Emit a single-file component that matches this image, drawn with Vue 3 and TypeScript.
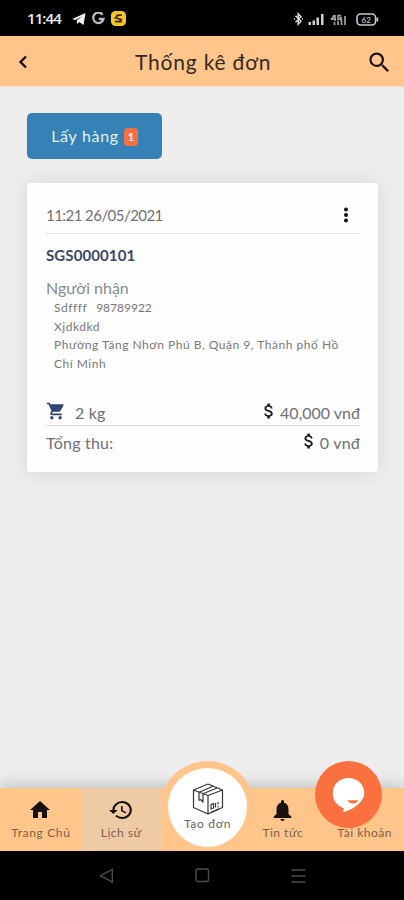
<script setup lang="ts">
interface Order {
  time: string
  code: string
  name: string
  phone: string
  note: string
  address: string
  weight: string
  fee: string
  total: string
}

const order: Order = {
  time: '11:21 26/05/2021',
  code: 'SGS0000101',
  name: 'Sdffff',
  phone: '98789922',
  note: 'Xjdkdkd',
  address: 'Phường Tăng Nhơn Phú B, Quận 9, Thành phố Hồ Chí Minh',
  weight: '2 kg',
  fee: '40,000 vnđ',
  total: '0 vnđ',
}
const pending = 1
const dollar =
  'M11.8 10.9c-2.27-.59-3-1.2-3-2.15 0-1.09 1.01-1.85 2.7-1.85 1.78 0 2.44.85 2.5 2.1h2.21c-.07-1.72-1.12-3.3-3.21-3.81V3h-3v2.16c-1.94.42-3.5 1.68-3.5 3.61 0 2.31 1.91 3.46 4.7 4.13 2.5.6 3 1.48 3 2.41 0 .69-.49 1.79-2.7 1.79-2.06 0-2.87-.92-2.98-2.1h-2.2c.12 2.19 1.76 3.42 3.68 3.83V21h3v-2.15c1.95-.37 3.5-1.5 3.5-3.55 0-2.84-2.43-3.81-4.7-4.4z'
</script>

<template>
  <div class="screen">
    <div class="status">
      <span class="clock">11:44</span>
      <svg class="plane" width="14" height="12" viewBox="0 0 14 12"><path d="M0 6 13.5 0 11.5 12 7.2 9 5.2 11 4.8 7.4 10 3.2 3.6 7z" fill="#f2f2f2" /></svg>
      <svg class="goog" width="13" height="13" viewBox="0 0 13 13"><path d="M10.6 2.7A5.2 5.2 0 1 0 11.5 7H6.8" fill="none" stroke="#bdbdbd" stroke-width="2.3" /></svg>
      <svg class="app" width="15" height="15" viewBox="0 0 15 15"><rect width="15" height="15" rx="4.5" fill="#f5c52c" /><path d="M10.8 4.2H7.2L4.5 6.8l5.700 1.600-2.200 2.300H4M5 4.500h2M8 10.700h3" fill="none" stroke="#3c3212" stroke-width="1.700" /></svg>
      <span class="grow"></span>
      <svg class="right-icons" width="87" height="14" viewBox="0 0 87 14">
        <path d="M2.500 3.800 8 9.300 5.200 12.200V1.800L8 4.700 2.500 10.200" fill="none" stroke="#d8d8d8" stroke-width="1.500" />
        <path d="M1.500 6v2M9.500 6v2" stroke="#aaa" />
        <path d="M15.500 10H18v3h-2.500zM19.500 8.500H22V13h-2.500zM23.500 5.500H26V13h-2.500zM28 2h2.500v11H28z" fill="#d0d0d0" />
        <path d="M38.500 6v2M41 3l-2 4h4M42 3v6M48 3.500h-3v4h3V5.500h-1.500M41.500 10v3M45 9v4M48.500 7.500V13M52 4v9" fill="none" stroke="#aaa" stroke-width="1.600" />
        <rect x="64" y="2" width="18.500" height="11" rx="3.500" fill="none" stroke="#c8c8c8" stroke-width="1.600" />
        <path d="M84.300 5.500v4" stroke="#c8c8c8" stroke-width="1.800" />
        <text x="73.200" y="10.500" text-anchor="middle" font-size="8" font-weight="700" fill="#b5b5b5">62</text>
      </svg>
    </div>

    <header class="header">
      <svg class="back" width="10" height="14" viewBox="0 0 10 14"><path d="M8 1.500 2.500 7 8 12.500" fill="none" stroke="#1b130c" stroke-width="2.400" /></svg>
      <h1 class="title">Thống kê đơn</h1>
      <svg class="search" width="27" height="27" viewBox="0 0 24 24"><path fill="#1b130c" d="M15.500 14h-.79l-.28-.27A6.471 6.471 0 0 0 16 9.500 6.500 6.500 0 1 0 9.500 16c1.610 0 3.090-.59 4.230-1.570l.27.28v.79l5 4.990L20.490 19l-4.990-5zm-6 0C7.010 14 5 11.990 5 9.500S7.010 5 9.500 5 14 7.010 14 9.500 11.990 14 9.500 14z" /></svg>
    </header>

    <main class="content">
      <button class="pickup" type="button">
        <span>Lấy hàng</span><span class="badge">{{ pending }}</span>
      </button>

      <section class="card">
        <div class="card-head">
          <span class="time">{{ order.time }}</span>
          <svg width="6" height="16" viewBox="0 0 6 16" class="dots"><circle cx="3" cy="2.400" r="2" /><circle cx="3" cy="8" r="2" /><circle cx="3" cy="13.600" r="2" /></svg>
        </div>
        <div class="code">{{ order.code }}</div>
        <div class="receiver">Người nhận</div>
        <div class="details">
          <div><span>{{ order.name }}</span><span class="phone">{{ order.phone }}</span></div>
          <div>{{ order.note }}</div>
          <div class="address">{{ order.address }}</div>
        </div>
        <div class="row fee">
          <svg class="cart" width="20" height="20" viewBox="0 0 24 24"><path fill="#2f4474" d="M7 18c-1.100 0-1.990.9-1.990 2S5.900 22 7 22s2-.9 2-2-.9-2-2-2zM1 2v2h2l3.600 7.590-1.350 2.450c-.16.28-.25.61-.25.96 0 1.100.9 2 2 2h12v-2H7.420c-.14 0-.25-.11-.25-.25l.03-.12.9-1.630h7.450c.75 0 1.410-.41 1.750-1.030l3.580-6.490A1 1 0 0 0 20 4H5.210l-.94-2H1zm16 16c-1.100 0-1.990.9-1.990 2s.89 2 1.990 2 2-.9 2-2-.9-2-2-2z" /></svg>
          <span class="weight">{{ order.weight }}</span>
          <span class="grow"></span>
          <svg class="dollar" width="20" height="20" viewBox="0 0 24 24"><path :d="dollar" /></svg>
          <span>{{ order.fee }}</span>
        </div>
        <div class="row total">
          <span class="total-label">Tổng thu:</span>
          <span class="grow"></span>
          <svg class="dollar" width="20" height="20" viewBox="0 0 24 24"><path :d="dollar" /></svg>
          <span class="total-text">{{ order.total }}</span>
        </div>
      </section>
    </main>

    <nav class="nav">
      <div class="tab">
        <svg width="24" height="24" viewBox="0 0 24 24"><path d="M10 20v-6h4v6h5v-8h3L12 3 2 12h3v8z" /></svg>
        <span class="t-home">Trang Chủ</span>
      </div>
      <div class="tab active">
        <svg width="26" height="24" viewBox="0 0 24 24" preserveAspectRatio="none"><path d="M13 3a9 9 0 0 0-9 9H1l3.890 3.890.07.14L9 12H6a7 7 0 1 1 2.060 4.940l-1.420 1.420A9 9 0 1 0 13 3zm-1 5v5l4.280 2.540.72-1.210-3.500-2.080V8z" /></svg>
        <span>Lịch sử</span>
      </div>
      <div class="tab"></div>
      <div class="tab">
        <svg width="25" height="24" viewBox="0 0 24 24"><path d="M12 23c1.100 0 2-.9 2-2h-4a2 2 0 0 0 2 2zm6-7v-5c0-3.070-1.640-5.640-4.500-6.320V3.500a1.500 1.500 0 0 0-3 0v1.180C7.630 5.360 6 7.920 6 11v5l-2.800 2.500V20h17.600v-1.500z" /></svg>
        <span>Tin tức</span>
      </div>
      <div class="tab account">
        <svg width="24" height="24" viewBox="0 0 24 24"><circle cx="12" cy="8" r="4" /></svg>
        <span>Tài khoản</span>
      </div>
      <div class="create">
        <svg width="32" height="32" viewBox="0 0 32 32" fill="none" stroke="#353535" stroke-width="1.200" stroke-linejoin="round">
          <path d="M16 1 30.500 7v17.500L16 31 1.500 24.500V7zM1.500 7 16 12.500 30.500 7M16 12.500V31" />
          <path d="M7 9.200 21 3.200M11 10.700 25 5M7 9.200v8l1.800-.6 2.200 2.400v-8.300" />
          <path d="m19 21.500 2.500-1v4.500L19 26zm4.500-1.500v4.500m2.500-5.500v2.500m0 1.500v1.500m-7 4.700 8-3.300" />
        </svg>
        <span>Tạo đơn</span>
      </div>
      <div class="chat">
        <svg width="34" height="36" viewBox="0 0 34 36"><path fill="#fff" d="M16.500 1C7.500 1 .8 7.500.8 16.200c0 7.600 4.500 13 11 14.800L11 35.300c6-1.600 12.500-5 16.500-9.300 3-3.200 4.800-6.200 4.800-10C32.300 7.500 25.500 1 16.500 1z" /><path d="M15.500 23.200h10.800c-2.300 4.300-8.500 4.300-10.800 0z" fill="#fa703f" /></svg>
      </div>
    </nav>

    <div class="system">
      <svg width="15" height="16" viewBox="0 0 15 16"><path d="M13.300 1.500v12.500L1.500 7.700z" /></svg>
      <svg width="15" height="15" viewBox="0 0 15 15"><rect x="1" y="1" width="12.500" height="12.500" rx="2" /></svg>
      <svg width="15" height="16" viewBox="0 0 15 16"><path d="M.5 2h14M.5 8h14M.5 14h14" /></svg>
    </div>
  </div>
</template>

<style>
body {
  margin: 0;
  background: #000;
}
</style>

<style scoped>
.screen {
  width: 404px;
  height: 900px;
  display: flex;
  flex-direction: column;
  overflow: hidden;
  background: #eee;
  color: #707070;
  font-family: Lato, "Noto Sans", sans-serif;
  white-space: nowrap;
}
.grow { flex: 1; }
.status {
  box-sizing: border-box;
  height: 36px;
  flex: none;
  display: flex;
  align-items: center;
  padding: 1px 24px 0 27px;
  background: #000;
}
.clock {
  width: 35px;
  font: 600 15px/18px "Open Sans", sans-serif;
  letter-spacing: -0.9px;
  color: #eee;
  transform: translateY(-1px);
}
.plane { margin-left: 10px; }
.goog { margin-left: 6px; }
.app { margin-left: 6px; }
.header {
  box-sizing: border-box;
  height: 51px;
  flex: none;
  display: flex;
  align-items: center;
  justify-content: space-between;
  padding: 2px 11px 0 18px;
  background: #ffc58b;
  border-bottom: 1px solid #f2dfcc;
}
.title {
  margin: 0 0 0 12px;
  width: 136px;
  font-size: 21px;
  line-height: 26px;
  font-weight: 400;
  letter-spacing: 0.8px;
  color: #35291f;
}
.content {
  flex: 1;
  padding: 26px 26px 0 27px;
}
.pickup {
  display: flex;
  align-items: center;
  justify-content: center;
  gap: 5px;
  width: 135px;
  height: 46px;
  padding: 0;
  border: 0;
  border-radius: 5px;
  background: #3681b5;
  color: #e4f0f8;
  font: 400 16px/20px Lato, "Noto Sans", sans-serif;
  letter-spacing: 0.7px;
}
.badge {
  width: 14px;
  height: 18px;
  margin-top: 2px;
  border-radius: 4px;
  background: #f8703f;
  color: #fff;
  font-size: 11px;
  line-height: 18px;
  font-weight: 700;
  letter-spacing: 0;
  text-align: center;
}
.card {
  box-sizing: border-box;
  height: 289px;
  margin-top: 24px;
  padding: 14px 18px 0 19px;
  border-radius: 4px;
  background: #fefefe;
  box-shadow: 0 1px 22px rgba(0, 0, 0, 0.1);
}
.card-head {
  box-sizing: border-box;
  height: 37px;
  display: flex;
  align-items: center;
  justify-content: space-between;
  border-bottom: 1px solid #e3e3e3;
}
.time {
  font-size: 15px;
  letter-spacing: -0.55px;
}
.dots { margin-right: 11px; fill: #111; }
.code {
  margin-top: 11px;
  font-size: 15px;
  line-height: 20px;
  font-weight: 700;
  letter-spacing: 0.1px;
  color: #384967;
}
.receiver {
  margin-top: 13px;
  font-size: 16px;
  line-height: 20px;
  color: #858b91;
}
.details {
  margin: 1px 10px 0 8px;
  font-size: 12px;
  line-height: 18.600px;
  letter-spacing: 0.52px;
  color: #777;
}
.phone {
  margin-left: 9px;
  letter-spacing: 0;
}
.address { white-space: normal; }
.row {
  display: flex;
  align-items: center;
  font-size: 16px;
}
.fee {
  box-sizing: border-box;
  height: 28px;
  margin-top: 25px;
  padding-top: 1px;
  border-bottom: 1px solid #d8d8d8;
}
.cart { margin-bottom: 2px; }
.total { height: 32px; }
.total-label { letter-spacing: 0.2px; }
.total-text { letter-spacing: 0.2px; }
.weight { margin-left: 9px; letter-spacing: 0.2px; }
.dollar { margin: 0 1px 2px 0; fill: #1a1a1a; }
.nav {
  position: relative;
  height: 63px;
  flex: none;
  display: grid;
  grid-template-columns: repeat(5, 1fr);
  background: #ffc58b;
  box-shadow: 0 -2px 16px rgba(0, 0, 0, 0.22);
}
.tab {
  display: flex;
  flex-direction: column;
  align-items: center;
  padding-top: 10px;
  font-size: 12px;
  line-height: 15px;
  letter-spacing: 0.5px;
  color: #7c6147;
  fill: #17120d;
}
.tab svg { margin-bottom: 3px; }
.t-home { letter-spacing: 0.65px; padding-left: 1px; }
.account { padding-left: 2px; }
.active { background: #eecaa5; }
.create {
  position: absolute;
  left: 161px;
  top: -27px;
  box-sizing: border-box;
  width: 93px;
  height: 90px;
  padding-top: 15px;
  border: 7px solid #ffc58b;
  border-bottom-width: 4px;
  border-radius: 50%;
  background: #fff;
  display: flex;
  flex-direction: column;
  align-items: center;
  font-size: 12px;
  line-height: 17px;
  letter-spacing: 0.7px;
  color: #666;
}
.chat {
  position: absolute;
  left: 315px;
  top: -27px;
  width: 67px;
  height: 67px;
  border-radius: 50%;
  background: #fa703f;
  display: grid;
  place-items: center;
}
.system {
  height: 49px;
  flex: none;
  display: flex;
  align-items: center;
  justify-content: space-between;
  box-sizing: border-box;
  padding: 0 98px 0 99px;
  background: #000;
}
.system svg {
  fill: none;
  stroke: #4c4c4c;
  stroke-width: 1.400;
}
</style>
